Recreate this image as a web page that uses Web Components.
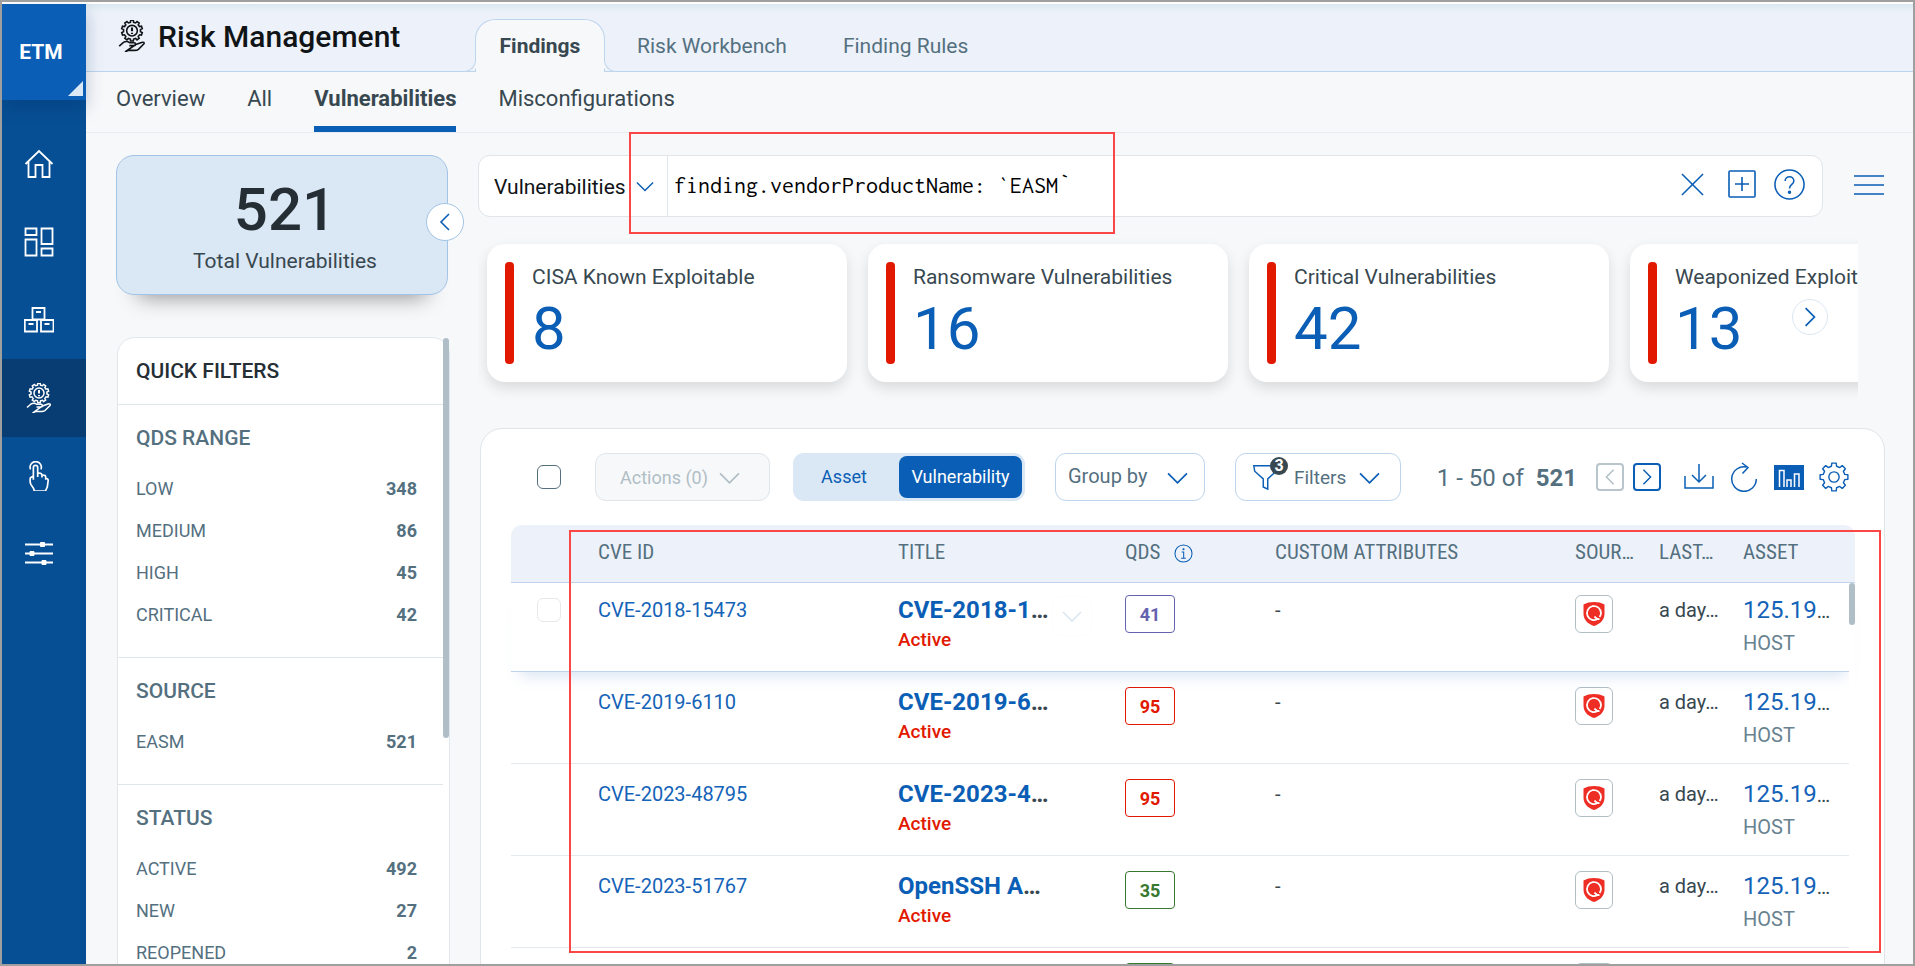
<!DOCTYPE html>
<html lang="en">
<head>
<meta charset="utf-8">
<title>Risk Management</title>
<style>
  html, body { margin: 0; height: 100%; }
  body {
    font-family: Roboto, "Liberation Sans", sans-serif;
    font-size: 21px;
    color: #384850;
    --blue: #0a5eb5;
    --slate: #54707f;
    --ink: #384850;
    --line: #e0e7eb;
    --pale: #dae7f4;
    --edge: #bdd5ec;
    --red: #e11900;
  }
</style>
</head>
<body>
<risk-app></risk-app>
<script>
const BASE = `
  *, *::before, *::after { box-sizing: border-box; }
  a { color: inherit; text-decoration: none; }
  button, input, select { font: inherit; color: inherit; margin: 0; padding: 0; border: 0; background: none; outline: 0; }
  h1, h2, h3, p, ul, dl, dd { margin: 0; padding: 0; font: inherit; list-style: none; }
`;

function define(name, css, render) {
  customElements.define(name, class extends HTMLElement {
    connectedCallback() {
      if (this.shadowRoot) return;
      this.attachShadow({ mode: 'open' });
      const t = document.createElement('template');
      t.innerHTML = `<style>${BASE}${css}</style>${render(this)}`;
      this.shadowRoot.append(t.content.cloneNode(true));
    }
  });
}

/* Closed cog outline: n teeth between radii r (root) and R (tip). */
function cog(cx, cy, r, R, n) {
  const pts = [];
  const step = Math.PI * 2 / n;
  for (let i = 0; i < n; i++) {
    const a = i * step - Math.PI / 2;
    for (const [k, rad] of [[-0.3, r], [-0.2, R], [0.2, R], [0.3, r]]) {
      pts.push((cx + rad * Math.cos(a + k * step)).toFixed(2) + ' ' + (cy + rad * Math.sin(a + k * step)).toFixed(2));
    }
  }
  return 'M' + pts.join('L') + 'Z';
}

const RISK = `<path d="${cog(15, 10, 8, 9.8, 10)}"/><circle cx="15" cy="10" r="5"/><path stroke-width="2" d="M15 7v3.6M15 12v1.2"/>
  <path d="M3 24.500l4-3.500c2-1.300 4-1 6 .3h4c1.800 0 1.800 2.700 0 2.700h-4.500M18.500 23l5.500-2c1.700-.6 3 .3 2 1.500l-5 5c-1 .9-2 1-3.500 1h-6l-3 1.500z"/>`;
const ICONS = {
  home: [30, 1.8, '<path d="M1.500 15L15 2l13.500 13M4.500 12.500v15.500h7V16h7v12h7V12.500"/>'],
  dash: [30, 1.8, '<path d="M1.500 1.500h11v6.500h-11zM1.500 12.500h11v16h-11zM17.500 1.500h11v15.500h-11zM17.500 21.500h11v7h-11z"/>'],
  boxes: [30, 1.8, '<path d="M8.500 3h12v11.500h-12zM.8 15H13v11.500H.8zM17 15h12.500v11.500H17zM12 7h5M4.500 19h5M20.500 19h5"/>'],
  risk: [30, 1.5, RISK],
  hand: [32, 1.8, '<path d="M7 9a6 6 0 1 1 11 0M10 20V7a2.300 2.300 0 0 1 4.600 0V17v-4c4-.5 4.600 1 4.600 3v1.500V15c3-.3 4 .8 4 2.500V19c2.300-.5 2.800 1 2.500 2.500l-.8 6-2 4.500H11l-.7-2.500-3-4.500c-1-2-1-4-.5-7L10 16"/>'],
  sliders: [30, 1.8, '<path d="M1 5.500h28M1 14.500h28M1 23.500h28"/><path fill="currentColor" stroke-width="1" d="M16.500 3.500h4v4h-4zM6 12.500h4v4H6zM18 21.500h4v4h-4z"/>'],
  down: [20, 1.6, '<path d="M1 6l9 9 9-9"/>'],
  left: [20, 1.6, '<path d="M14 2l-8 8 8 8"/>'],
  right: [20, 1.6, '<path d="M6 2l8 8-8 8"/>'],
  close: [24, 1.6, '<path d="M1 1l22 22M23 1L1 23"/>'],
  plus: [30, 1.6, '<rect x="2" y="2" width="26" height="26" rx="1"/><path d="M15 8v14M8 15h14"/>'],
  help: [32, 1.6, '<circle cx="16" cy="16" r="15"/><path d="M11.500 12.500c0-6 9-6 9 0 0 3.500-4.500 3.500-4.500 7.500"/><circle cx="16" cy="24" r="1" fill="currentColor"/>'],
  menu: [30, 1.6, '<path d="M0 6h30M0 15h30M0 24h30"/>'],
  filter: [30, 1.6, '<path d="M2 2h26l-1 6-9.500 8.500V28l-5-2.500v-9L3 8z"/>'],
  download: [30, 1.5, '<path d="M1 14v12h28V14M15 2v18M8 13l7 7 7-7"/>'],
  refresh: [30, 1.5, '<path d="M17.500 5A12.300 12.300 0 1 0 27.300 17M13 1l6 4.500-5.500 6"/>'],
  chart: [30, 1.5, '<path fill="currentColor" stroke="none" d="M0 3h30v25H0z"/><path stroke="#fff" d="M5.500 25V8.500h4.500V25M13 25v-7h4v7M20.500 25V12h4.500v13"/>'],
  gear: [32, 1.5, `<path stroke-linejoin="round" d="${cog(16, 16, 11.8, 15, 8)}"/><circle cx="16" cy="16" r="5.500"/>`],
  info: [20, 1.1, '<circle cx="10" cy="10" r="9"/><path d="M8 8.500h2.200V15M7.500 15h5"/><circle cx="10" cy="5.500" r=".6" fill="currentColor"/>'],
  shield: [24, 0, '<path fill="#ee2e24" d="M12 0c4 0 7.500.8 10.500 2.500v9C22.500 18 18 22 12 24 6 22 1.500 18 1.500 11.500v-9C4.500.8 8 0 12 0z"/><path fill="none" stroke="#fff" stroke-width="1.800" d="M16 16.800A7 7 0 1 1 19 11c0 1.600-.6 3-1.400 4M12.500 14.500c1.200 1.900 2.600 2.700 5 2.700"/>']
};

define('app-icon', `
  :host { display: inline-flex; flex: none; width: var(--size, 30px); height: var(--size, 30px); }
  svg { width: 100%; height: 100%; display: block; }
`, el => {
  const [box, w, body] = ICONS[el.getAttribute('name')];
  return `<svg viewBox="0 0 ${box} ${box}" fill="none" stroke="currentColor" stroke-width="${w}" aria-hidden="true">${body}</svg>`;
});

define('side-nav', `
  :host { display: block; flex: none; width: 84px; background: #074f94; color: #fff; }
  .brand { position: relative; display: flex; align-items: center; justify-content: center; height: 96px; padding-right: 6px;
    background: var(--blue); font-weight: 700; box-shadow: 0 8px 16px rgba(0, 40, 90, .25); }
  .brand::after { content: ""; position: absolute; right: 3px; bottom: 4px; border-style: solid; border-width: 0 0 15px 15px; border-color: transparent transparent var(--pale); }
  nav { padding-top: 25px; }
  nav a { display: flex; align-items: center; justify-content: center; height: 78px; padding-right: 10px; }
  nav a.on { background: #083d73; }
  app-icon { --size: 30px; }
`, () => `<a class="brand" href="#">ETM</a><nav>${
  [['home', 'Home'], ['dash', 'Dashboard'], ['boxes', 'Inventory'], ['risk', 'Risk Management'], ['hand', 'Response'], ['sliders', 'Configuration']]
    .map(([i, l]) => `<a href="#" aria-label="${l}"${i === 'risk' ? ' class="on"' : ''}><app-icon name="${i}"></app-icon></a>`).join('')
}</nav>`);

define('app-header', `
  :host { display: flex; height: 68px; padding-left: 30px; background: linear-gradient(#dae7f0, #edf2fa 8px); border-bottom: 1px solid var(--edge); }
  h1 { display: flex; align-items: center; gap: 10px; width: 359px; flex: none; padding-bottom: 3px; font-size: 30px; font-weight: 500; color: #101417; }
  app-icon { --size: 32px; }
  nav { display: flex; gap: 56px; padding-top: 15px; }
  a { display: flex; align-items: center; color: var(--slate); height: 53px; }
  a.on { position: relative; width: 130px; justify-content: center; margin-right: -24px; font-weight: 700; color: var(--ink);
    background: #f7f8fa; border: 1px solid var(--edge); border-bottom: 0; border-radius: 20px 20px 0 0; }
  a.on::before, a.on::after { content: ""; position: absolute; bottom: 0; width: 12px; height: 14px; background: #edf2fa; border: 1px solid var(--edge); border-top: 0; }
  a.on::before { right: 100%; border-left: 0; border-bottom-right-radius: 12px; box-shadow: 4px 0 0 -1px #f7f8fa; }
  a.on::after { left: 100%; border-right: 0; border-bottom-left-radius: 12px; box-shadow: -4px 0 0 -1px #f7f8fa; }
`, () => `<h1><app-icon name="risk"></app-icon>Risk Management</h1>
  <nav><a class="on" href="#">Findings</a><a href="#">Risk Workbench</a><a href="#">Finding Rules</a></nav>`);

define('sub-nav', `
  :host { display: flex; gap: 42px; height: 61px; padding-left: 30px; border-bottom: 1px solid #e6ecef; font-size: 22px; }
  a { display: flex; align-items: center; padding-bottom: 2px; border-bottom: 6px solid transparent; color: var(--ink); }
  a.on { font-weight: 700; border-color: var(--blue); }
`, () => `<a href="#">Overview</a><a href="#">All</a><a class="on" href="#">Vulnerabilities</a><a href="#">Misconfigurations</a>`);

define('total-card', `
  :host { position: relative; display: block; padding: 24px 0 19px 6px; text-align: center; background: var(--pale);
    border: 1px solid #a3c4e6; border-radius: 18px; box-shadow: 0 24px 20px -22px rgba(0, 0, 0, .42); }
  strong { display: block; font-size: 60px; line-height: 60px; font-weight: 500; color: #242e34; }
  span { display: block; margin-top: 7px; line-height: 28px; }
  button { position: absolute; right: -17px; top: 47px; width: 38px; height: 38px; display: flex; align-items: center; justify-content: center;
    background: #fff; border: 1px solid #a3c4e6; border-radius: 50%; color: var(--blue); }
  app-icon { --size: 20px; }
`, () => `<strong>521</strong><span>Total Vulnerabilities</span><button aria-label="Collapse filters"><app-icon name="left"></app-icon></button>`);

define('filter-group', `
  :host { display: block; padding: 19px 26px 21px 18px; border-top: 1px solid var(--line); color: var(--slate); }
  h3 { margin-bottom: 16px; line-height: 28px; font-weight: 500; }
  a { display: flex; justify-content: space-between; font-size: 18px; line-height: 42px; }
  b { font-weight: 700; }
`, el => `<h3>${el.getAttribute('heading')}</h3>${el.getAttribute('items').split(',').map(s => {
  const [k, v] = s.split(':');
  return `<a href="#"><span>${k}</span><b>${v}</b></a>`;
}).join('')}`);

define('quick-filters', `
  :host { position: relative; display: block; background: #fff; border: 1px solid var(--line); border-radius: 18px 18px 0 0; margin-left: 1px; }
  h2 { padding: 19px 18px; line-height: 28px; font-weight: 500; color: #242e34; }
  .thumb { position: absolute; right: 0; top: 0; width: 6px; height: 400px; border-radius: 3px; background: #b0bec8; }
  .list { margin-right: 6px; }
`, () => `<h2>QUICK FILTERS</h2><div class="list"><slot></slot></div><div class="thumb"></div>`);

define('search-bar', `
  :host { position: relative; display: flex; align-items: center; gap: 31px; }
  form { flex: 1; min-width: 0; display: flex; height: 62px; background: #fff; border: 1px solid #dfe5e9; border-radius: 12px; }
  .scope { position: relative; display: flex; align-items: center; width: 189px; border-right: 1px solid var(--line); color: #101417; }
  select { appearance: none; width: 100%; height: 100%; padding: 2px 0 0 15px; }
  .scope app-icon { position: absolute; right: 13px; --size: 18px; color: var(--blue); pointer-events: none; }
  input { flex: 1; min-width: 0; padding: 0 0 2px 6px; font-family: Inconsolata, "Liberation Mono", monospace; font-size: 24px; color: #000;
    font-variant-ligatures: none; font-kerning: none; }
  .tools { display: flex; align-items: center; gap: 17px; padding: 0 17px 4px 0; }
  button { display: flex; color: var(--blue); }
  .close { --size: 23px; padding-right: 6px; }
  .plus { --size: 30px; }
  .help { --size: 31px; }
  .menu { padding: 0 1px 2px 0; }
  .mark { position: absolute; left: 151px; top: -23px; width: 486px; height: 102px; border: 2px solid #fb4646; pointer-events: none; }
`, () => `<form>
    <label class="scope"><select aria-label="Search scope"><option>Vulnerabilities</option></select><app-icon name="down"></app-icon></label>
    <input aria-label="Query" spellcheck="false" value="finding.vendorProductName: \`EASM\`">
    <div class="tools">
      <button type="button" class="close" aria-label="Clear"><app-icon name="close"></app-icon></button>
      <button type="button" class="plus" aria-label="Save query"><app-icon name="plus"></app-icon></button>
      <button type="button" class="help" aria-label="Help"><app-icon name="help"></app-icon></button>
    </div>
  </form>
  <button class="menu" aria-label="Menu"><app-icon name="menu"></app-icon></button>
  <div class="mark"></div>`);

define('stat-card', `
  :host { display: flex; flex: none; gap: 18px; width: 360px; height: 138px; padding: 18px; background: #fff; border-radius: 18px; box-shadow: 0 6px 14px rgba(0, 0, 0, .12); }
  .bar { width: 9px; border-radius: 4px; background: var(--red); }
  .text { padding-top: 3px; white-space: nowrap; }
  p { line-height: 24px; }
  strong { display: block; margin-top: 10px; font-size: 60px; line-height: 60px; font-weight: 400; color: var(--blue); }
`, el => `<div class="bar"></div><div class="text"><p>${el.getAttribute('label')}</p><strong>${el.getAttribute('value')}</strong></div>`);

define('stat-strip', `
  :host { position: relative; display: block; margin: 9px 27px 0 0; }
  .row { display: flex; gap: 21px; padding: 18px 0 24px 9px; overflow: hidden; }
  button { position: absolute; right: 30px; top: 73px; width: 36px; height: 36px; display: flex; align-items: center; justify-content: center;
    background: #fff; border: 1px solid var(--pale); border-radius: 50%; color: var(--blue); }
  app-icon { --size: 22px; }
`, () => `<div class="row"><slot></slot></div><button aria-label="Next cards"><app-icon name="right"></app-icon></button>`);

define('list-toolbar', `
  :host { display: flex; align-items: center; height: 96px; padding: 0 6px 0 26px; font-size: 18px; color: var(--slate); white-space: nowrap; }
  input[type=checkbox] { appearance: none; flex: none; width: 24px; height: 24px; border: 1px solid #54707f; border-radius: 6px; margin-right: 34px; }
  button, select { display: flex; align-items: center; }
  .box { flex: none; height: 48px; border: 1px solid var(--edge); border-radius: 11px; background: #fff; }
  .box app-icon { --size: 21px; color: var(--blue); }
  .actions { width: 175px; padding-left: 24px; gap: 11px; margin-right: 23px; background: #f7f8fa; border-color: #dfe5e9; color: #b0bec5; }
  .actions app-icon { color: inherit; }
  .toggle { flex: none; display: flex; width: 232px; height: 48px; padding: 3px 3px 3px 0; border-radius: 11px; background: var(--pale); margin-right: 30px; color: var(--blue); }
  .toggle button { justify-content: center; border-radius: 8px; flex: 1; padding: 0 4px 2px 0; }
  .toggle .on { flex: none; width: 123px; padding-right: 0; background: var(--blue); color: #fff; }
  .group { position: relative; display: flex; align-items: center; width: 150px; margin-right: 30px; font-size: 20px; }
  .group select { appearance: none; width: 100%; height: 100%; padding: 0 0 2px 12px; }
  .group app-icon { position: absolute; right: 16px; pointer-events: none; }
  .filters { position: relative; width: 166px; padding-left: 16px; gap: 13px; font-size: 19px; }
  .filters .funnel { --size: 27px; }
  .filters i { position: absolute; left: 34px; top: 3px; width: 18px; height: 18px; border-radius: 50%; background: #384850; color: #fff;
    font: 700 16px/18px Roboto, sans-serif; text-align: center; }
  .filters span { margin-left: 2px; }
  .count { margin-left: auto; margin-right: 19px; padding-top: 2px; font-size: 24px; }
  .count b { margin-left: 6px; font-weight: 700; }
  .page { width: 28px; height: 28px; justify-content: center; border: 2px solid var(--blue); border-radius: 4px; color: var(--blue); margin-right: 9px; }
  .page app-icon { --size: 18px; }
  .page:disabled { border-color: #b8c5cc; color: #b0bec5; }
  .tools { display: flex; gap: 15px; margin-left: 14px; color: var(--blue); }
`, () => `<input type="checkbox" aria-label="Select all">
  <button class="box actions" disabled>Actions (0)<app-icon name="down"></app-icon></button>
  <div class="toggle"><button>Asset</button><button class="on">Vulnerability</button></div>
  <label class="box group"><select aria-label="Group by"><option>Group by</option></select><app-icon name="down"></app-icon></label>
  <button class="box filters"><app-icon class="funnel" name="filter"></app-icon><i>3</i><span>Filters</span><app-icon name="down"></app-icon></button>
  <span class="count">1 - 50 of <b>521</b></span>
  <button class="page" disabled aria-label="Previous page"><app-icon name="left"></app-icon></button>
  <button class="page" aria-label="Next page"><app-icon name="right"></app-icon></button>
  <div class="tools">
    <button aria-label="Download"><app-icon name="download"></app-icon></button>
    <button aria-label="Refresh"><app-icon name="refresh"></app-icon></button>
    <button aria-label="Charts"><app-icon name="chart"></app-icon></button>
    <button aria-label="Settings"><app-icon name="gear"></app-icon></button>
  </div>`);

define('qds-badge', `
  :host { display: block; width: 50px; height: 38px; border: 1px solid; border-radius: 4px; color: var(--red); font-size: 18px; line-height: 37px; font-weight: 700; text-align: center; }
  :host([level=medium]) { color: #6463af; }
  :host([level=low]) { color: #37782f; }
`, () => `<slot></slot>`);

const ROWS = [
  ['CVE-2018-15473', 'CVE-2018-1', 41, 'medium'],
  ['CVE-2019-6110', 'CVE-2019-6', 95, 'critical'],
  ['CVE-2023-48795', 'CVE-2023-4', 95, 'critical'],
  ['CVE-2023-51767', 'OpenSSH A', 35, 'low'],
  ['', '', '', 'low']
];

define('findings-table', `
  :host { position: relative; display: block; }
  table { width: 100%; table-layout: fixed; border-spacing: 0; }
  th { height: 58px; padding: 0 0 3px; text-align: left; font-family: "Roboto Condensed", Roboto, sans-serif; font-size: 21px; font-weight: 400;
    color: var(--slate); background: #edf2fa; border-bottom: 1px solid var(--edge); white-space: nowrap; }
  th:first-child { border-top-left-radius: 11px; }
  th:last-child { border-top-right-radius: 11px; }
  th app-icon { --size: 19px; margin-left: 13px; vertical-align: -4px; color: var(--blue); }
  .pick { width: 87px; } .cve { width: 300px; } .title { width: 227px; } .qds { width: 150px; }
  .src, .seen { width: 84px; } .asset { width: 112px; }
  td { height: 92px; padding: 16px 0 0; vertical-align: top; border-bottom: 1px solid #e4e9ed; font-size: 20px; line-height: 28px; white-space: nowrap; }
  td.chip { padding-top: 15px; }
  tr.hover td { height: 89px; padding-top: 13px; border-color: var(--edge); background: #fff; }
  tr.hover td.chip { padding-top: 12px; }
  tr.hover { position: relative; box-shadow: 0 14px 14px -10px rgba(60, 120, 190, .2); }
  .id { color: #1463b8; }
  .name { font-size: 24px; font-weight: 700; color: var(--blue); }
  .more-text { font-size: 24px; font-weight: 700; }
  .status { display: block; margin-top: 3px; font-size: 19px; line-height: 24px; font-weight: 500; color: var(--red); }
  .ip { font-size: 24px; color: #1463b8; }
  .host { display: block; margin-top: 6px; line-height: 24px; color: #688290; }
  .icon { display: flex; align-items: center; justify-content: center; width: 38px; height: 38px; border: 1px solid #b0bec5; border-radius: 6px; }
  .icon app-icon { --size: 24px; }
  input { appearance: none; display: block; width: 24px; height: 24px; margin: 2px 0 0 26px; border: 1px solid #e6e9ec; border-radius: 6px; }
  .cell { position: relative; }
  .more { position: absolute; left: 154px; top: 0; width: 40px; height: 40px; display: flex; align-items: center; justify-content: center; border-radius: 8px; color: var(--pale);
    border: 1px solid #fcfdfd; }
  .more app-icon { --size: 20px; }
  .track { position: absolute; right: 0; top: 58px; bottom: 0; width: 6px; background: #fff; }
  .thumb { width: 6px; height: 42px; border-radius: 3px; background: #b0bec8; }
  .mark { position: absolute; left: 58px; right: -26px; top: 5px; height: 423px; border: 2px solid #fb4646; pointer-events: none; }
`, () => `<table>
  <thead><tr><th class="pick"></th><th class="cve">CVE ID</th><th class="title">TITLE</th><th class="qds">QDS<app-icon name="info"></app-icon></th>
    <th>CUSTOM ATTRIBUTES</th><th class="src">SOUR…</th><th class="seen">LAST…</th><th class="asset">ASSET</th></tr></thead>
  <tbody>${ROWS.map(([id, name, q, level], i) => id ? `<tr${i ? '' : ' class="hover"'}>
    <td>${i ? '' : '<input type="checkbox" aria-label="Select CVE-2018-15473">'}</td>
    <td><a class="id" href="#">${id}</a></td>
    <td><div class="cell"><a class="name" href="#">${name}</a><span class="more-text">…</span><span class="status">Active</span>${i ? '' : '<button class="more" aria-label="Row actions"><app-icon name="down"></app-icon></button>'}</div></td>
    <td class="chip"><qds-badge level="${level}">${q}</qds-badge></td>
    <td>-</td>
    <td class="chip"><span class="icon"><app-icon name="shield"></app-icon></span></td>
    <td>a day…</td>
    <td><a class="ip" href="#">125.19</a>…<span class="host">HOST</span></td></tr>`
    : `<tr><td></td><td></td><td></td><td class="chip"><qds-badge level="${level}"></qds-badge></td><td></td><td class="chip"><span class="icon"></span></td><td></td><td></td></tr>`).join('')}
  </tbody></table>
  <div class="track"><div class="thumb"></div></div><div class="mark"></div>`);

define('findings-panel', `
  :host { display: block; margin: 22px 0 0 2px; padding: 0 29px 0 30px; background: #fff; border: 1px solid #dfe5e9; border-radius: 22px 22px 0 0; }
`, () => `<list-toolbar></list-toolbar><findings-table></findings-table>`);

define('risk-app', `
  :host { display: flex; height: 100vh; padding-top: 2px; border: 2px solid #9f9f9f; background: #fff; overflow: hidden; box-sizing: border-box; }
  .page { flex: 1; min-width: 0; background: #f7f8fa; }
  .body { display: flex; gap: 28px; padding: 22px 28px 0 30px; }
  aside { flex: none; width: 334px; }
  total-card { width: 332px; margin-bottom: 42px; }
  main { flex: 1; min-width: 0; }
`, () => `<side-nav></side-nav>
  <div class="page">
    <app-header></app-header>
    <sub-nav></sub-nav>
    <div class="body">
      <aside>
        <total-card></total-card>
        <quick-filters>
          <filter-group heading="QDS RANGE" items="LOW:348,MEDIUM:86,HIGH:45,CRITICAL:42"></filter-group>
          <filter-group heading="SOURCE" items="EASM:521"></filter-group>
          <filter-group heading="STATUS" items="ACTIVE:492,NEW:27,REOPENED:2"></filter-group>
        </quick-filters>
      </aside>
      <main>
        <search-bar></search-bar>
        <stat-strip>
          <stat-card label="CISA Known Exploitable" value="8"></stat-card>
          <stat-card label="Ransomware Vulnerabilities" value="16"></stat-card>
          <stat-card label="Critical Vulnerabilities" value="42"></stat-card>
          <stat-card label="Weaponized Exploits" value="13"></stat-card>
        </stat-strip>
        <findings-panel></findings-panel>
      </main>
    </div>
  </div>`);
</script>
</body>
</html>
